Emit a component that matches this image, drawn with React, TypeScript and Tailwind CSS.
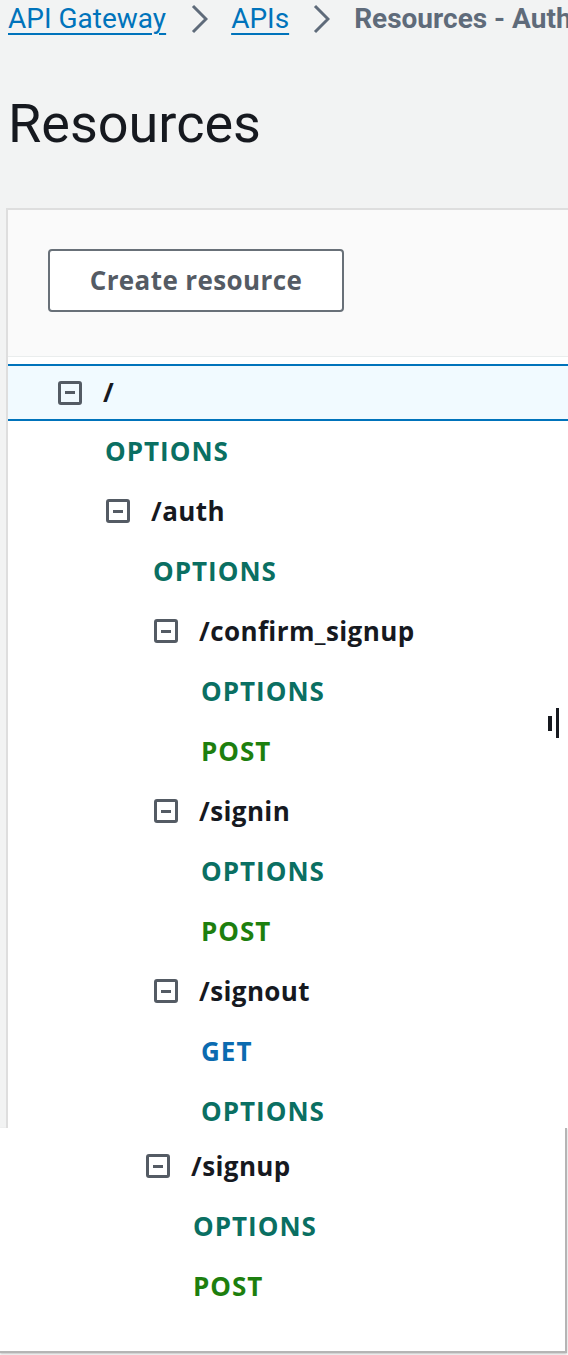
import React from "react";

type Row = { kind: "res" | "m"; depth: number; label: string; selected?: boolean };

const upper: Row[] = [
  { kind: "res", depth: 0, label: "/", selected: true },
  { kind: "m", depth: 0, label: "OPTIONS" },
  { kind: "res", depth: 1, label: "/auth" },
  { kind: "m", depth: 1, label: "OPTIONS" },
  { kind: "res", depth: 2, label: "/confirm_signup" },
  { kind: "m", depth: 2, label: "OPTIONS" },
  { kind: "m", depth: 2, label: "POST" },
  { kind: "res", depth: 2, label: "/signin" },
  { kind: "m", depth: 2, label: "OPTIONS" },
  { kind: "m", depth: 2, label: "POST" },
  { kind: "res", depth: 2, label: "/signout" },
  { kind: "m", depth: 2, label: "GET" },
  { kind: "m", depth: 2, label: "OPTIONS" },
];

const lower: Row[] = [
  { kind: "res", depth: 2, label: "/signup" },
  { kind: "m", depth: 2, label: "OPTIONS" },
  { kind: "m", depth: 2, label: "POST" },
];

const methodColor: Record<string, string> = {
  OPTIONS: "text-[#0a6f62]",
  POST: "text-[#1d7f0e]",
  GET: "text-[#0b6bb0]",
};

function Collapse() {
  return (
    <span className="flex h-[24px] w-[24px] shrink-0 items-center justify-center rounded-[3px] border-[3px] border-[#545b64]">
      <span className="h-[3px] w-[10px] bg-[#545b64]" />
    </span>
  );
}

const padRes = ["pl-[50px]", "pl-[98px]", "pl-[146px]"];
const padM = ["pl-[97px]", "pl-[145px]", "pl-[193px]"];

function TreeRow({ row }: { row: Row }) {
  if (row.kind === "res") {
    return (
      <div
        className={
          "flex items-center gap-[21px] " +
          padRes[row.depth] +
          (row.selected
            ? " h-[57px] border-y-2 border-[#0073bb] bg-[#f1faff]"
            : " h-[60px]")
        }
      >
        <Collapse />
        <span className="font-['Open_Sans',sans-serif] text-[26px] font-bold tracking-[0.4px] text-[#16191f]">
          {row.label}
        </span>
      </div>
    );
  }
  return (
    <div className={"flex h-[60px] items-center " + padM[row.depth]}>
      <span
        className={
          "font-['Open_Sans',sans-serif] text-[26px] font-bold tracking-[1px] " +
          methodColor[row.label]
        }
      >
        {row.label}
      </span>
    </div>
  );
}

function Chevron() {
  return (
    <svg width="17" height="30" viewBox="0 0 17 30" className="shrink-0">
      <polyline points="2,2 15,15 2,28" fill="none" stroke="#5f6b7a" strokeWidth="3" />
    </svg>
  );
}

export default function App() {
  return (
    <div className="relative h-[1355px] w-[568px] overflow-hidden bg-white">
      <div className="h-[1128px] overflow-hidden bg-[#f2f3f3]">
        {/* breadcrumb */}
        <div className="flex h-[38px] items-center overflow-hidden whitespace-nowrap pl-[8px] font-[Roboto,sans-serif] text-[28px] leading-[38px]">
          <span className="shrink-0 text-[#0073bb] underline decoration-2 underline-offset-[5px]">API Gateway</span>
          <span className="ml-[25px] mr-[23px] flex shrink-0 items-center">
            <Chevron />
          </span>
          <span className="shrink-0 text-[#0073bb] underline decoration-2 underline-offset-[5px]">APIs</span>
          <span className="ml-[24px] mr-[24px] flex shrink-0 items-center">
            <Chevron />
          </span>
          <span className="shrink-0 font-bold text-[#5f6b7a]">Resources - Auth</span>
        </div>
        {/* heading */}
        <h1 className="ml-[8px] mt-[56px] h-[60px] font-[Roboto,sans-serif] text-[54px] font-normal leading-[60px] text-[#16191f]">
          Resources
        </h1>
        {/* panel */}
        <div className="relative ml-[6px] mt-[54px] h-[920px] border-l-2 border-t-2 border-[#dedede] bg-white">
          <div className="h-[147px] border-b border-[#eaeded] bg-[#fafafa] pl-[40px] pt-[39px]">
            <button className="flex h-[63px] w-[296px] items-center justify-center rounded-[4px] border-2 border-[#687078] bg-white font-['Open_Sans',sans-serif] text-[26px] font-bold tracking-[0.4px] text-[#545b64]">
              Create resource
            </button>
          </div>
          <div className="pt-[7px]">
            {upper.map((r, i) => (
              <TreeRow key={i} row={r} />
            ))}
          </div>
          {/* resize handle */}
          <div className="absolute left-[540px] top-[498px] flex items-center gap-[4px]">
            <span className="h-[15px] w-[4px] bg-[#16191f]" />
            <span className="h-[30px] w-[3px] bg-[#16191f]" />
          </div>
        </div>
      </div>
      {/* lower piece */}
      <div className="h-[225px] w-[567px] border-b-2 border-r-2 border-[#b5b5b5] bg-white pt-[8px] shadow-[0_1px_2px_rgba(0,0,0,0.25)]">
        {lower.map((r, i) => (
          <TreeRow key={i} row={r} />
        ))}
      </div>
    </div>
  );
}
